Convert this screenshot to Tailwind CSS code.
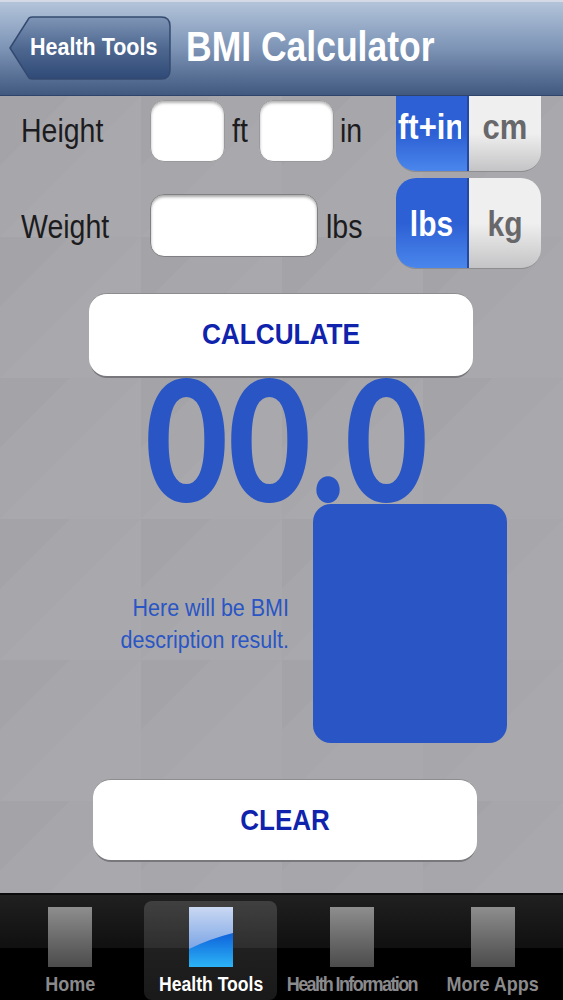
<!DOCTYPE html>
<html lang="en">
<head>
    <meta charset="UTF-8">
    <meta name="viewport" content="width=device-width, initial-scale=1.0">
    <title>BMI Calculator</title>
    <script src="https://cdn.jsdelivr.net/npm/@tailwindcss/browser@4"></script>
</head>
<body class="bg-black font-['Liberation_Sans',Arial,sans-serif]">
<div class="relative w-[563px] h-[1000px] flex flex-col overflow-hidden">

    <!-- Nav bar -->
    <header class="relative z-10 h-[96px] shrink-0 flex items-center pl-[9px] pb-[2px] border-t-2 border-b border-t-[#d5dbe6] border-b-[#2f4468] bg-gradient-to-b from-[#b3c4da] via-[#7d94b6] to-[#41597f]">
        <div class="relative w-[162px] h-[64px] flex items-center pl-[21px]">
            <svg class="absolute inset-0" width="162" height="64" viewBox="0 0 162 64">
                <defs>
                    <linearGradient id="backBg" x1="0" y1="0" x2="0" y2="1">
                        <stop offset="0" stop-color="#7f95b6"/>
                        <stop offset="0.5" stop-color="#4e6890"/>
                        <stop offset="1" stop-color="#2f4a77"/>
                    </linearGradient>
                </defs>
                <path d="M1 32 L20 2 Q21 1 24 1 H152 Q161 1 161 10 V54 Q161 63 152 63 H24 Q21 63 20 62 Z" fill="url(#backBg)" stroke="#34496f" stroke-width="1.5"/>
            </svg>
            <span class="relative inline-block scale-y-115 text-[21.5px] font-bold text-white whitespace-nowrap">Health Tools</span>
        </div>
        <h1 class="ml-[15px] inline-block scale-y-120 text-[35.5px] font-bold text-white whitespace-nowrap">BMI Calculator</h1>
    </header>

    <!-- Form and results -->
    <main class="relative flex-1 bg-[#a7a7ab] overflow-hidden">
        <svg class="absolute inset-0" width="563" height="797">
            <defs>
                <pattern id="tiles" width="141" height="141" patternUnits="userSpaceOnUse">
                    <path d="M0 141 L141 0 V141 Z" fill="#ffffff" fill-opacity="0.02"/>
                    <path d="M0 70 L70 0 H0 Z" fill="#000000" fill-opacity="0.015"/>
                </pattern>
            </defs>
            <rect width="563" height="797" fill="url(#tiles)"/>
        </svg>

        <div class="relative flex flex-col">
            <!-- Height -->
            <div class="flex h-[82px] pl-[21px]">
                <span class="w-[129px] pt-[13px] inline-block scale-y-115 origin-top text-[28.5px] leading-[34px] text-[#1c1c1e]">Height</span>
                <div class="mt-[4px] w-[75px] h-[62px] rounded-[14px] bg-white border border-[#9a9a9d] shadow-[inset_0_2px_3px_rgba(0,0,0,0.3)]"></div>
                <span class="w-[34px] pl-[7px] pt-[13px] inline-block scale-y-115 origin-top text-[28.5px] leading-[34px] text-[#1c1c1e]">ft</span>
                <div class="mt-[4px] w-[75px] h-[62px] rounded-[14px] bg-white border border-[#9a9a9d] shadow-[inset_0_2px_3px_rgba(0,0,0,0.3)]"></div>
                <span class="w-[62px] pl-[6px] pt-[13px] inline-block scale-y-115 origin-top text-[28.5px] leading-[34px] text-[#1c1c1e]">in</span>
                <div class="w-[145px] h-[76px] flex rounded-b-[20px] overflow-hidden border-b border-[#8d8d90]">
                    <div class="w-[73px] pb-[10px] pl-[2px] flex items-center border-r-2 border-[#24499f] bg-[linear-gradient(#2d60d4_50%,#4a86ec)]">
                        <div class="w-[63px] overflow-hidden">
                            <span class="inline-block scale-y-115 text-[31px] font-bold text-white whitespace-nowrap">ft+in</span>
                        </div>
                    </div>
                    <div class="flex-1 pb-[10px] flex items-center justify-center bg-[linear-gradient(#efefef_50%,#c4c4c6)]">
                        <span class="inline-block scale-y-115 text-[31px] font-bold text-[#68686a]">cm</span>
                    </div>
                </div>
            </div>

            <!-- Weight -->
            <div class="flex h-[115px] pl-[21px]">
                <span class="w-[129px] pt-[25px] inline-block scale-y-115 origin-top text-[28.5px] leading-[34px] text-[#1c1c1e]">Weight</span>
                <div class="mt-[16px] w-[168px] h-[63px] rounded-[14px] bg-white border border-[#808083] shadow-[inset_0_2px_3px_rgba(0,0,0,0.35)]"></div>
                <span class="w-[78px] pl-[8px] pt-[25px] inline-block scale-y-115 origin-top text-[28.5px] leading-[34px] text-[#1c1c1e]">lbs</span>
                <div class="w-[145px] h-[91px] flex rounded-[20px] overflow-hidden border-b border-[#8d8d90]">
                    <div class="w-[73px] flex items-center justify-center border-r-2 border-[#24499f] bg-[linear-gradient(#2d60d4_50%,#4a86ec)]">
                        <span class="inline-block scale-y-115 text-[30px] font-bold text-white">lbs</span>
                    </div>
                    <div class="flex-1 flex items-center justify-center bg-[linear-gradient(#efefef_50%,#c4c4c6)]">
                        <span class="inline-block scale-y-115 text-[30px] font-bold text-[#68686a]">kg</span>
                    </div>
                </div>
            </div>

            <!-- Calculate -->
            <div class="ml-[89px] w-[384px] h-[83px] rounded-[18px] bg-white border-t border-[#8d8d90] shadow-[0_3px_0_-1px_#77777c] flex items-center justify-center">
                <span class="inline-block scale-y-115 text-[26.2px] font-bold text-[#1023ad]">CALCULATE</span>
            </div>

            <!-- BMI value -->
            <div class="h-[128px] pb-[7px] pl-[10px] flex justify-center items-center">
                <span class="inline-block scale-y-118 font-['Lato',sans-serif] text-[143px] leading-[100px] font-black text-[#2a55c4]">00.0</span>
            </div>

            <!-- Description and colour block -->
            <div class="flex h-[239px]">
                <p class="w-[289px] mt-[88px] self-start text-right text-[21.5px] leading-[28px] text-[#2a55c4] origin-top scale-y-115">Here will be BMI<br>description result.</p>
                <div class="ml-[24px] w-[194px] h-[239px] rounded-[18px] bg-[#2a55c4]"></div>
            </div>

            <!-- Clear -->
            <div class="ml-[93px] mt-[36px] w-[384px] h-[81px] rounded-[18px] bg-white border-t border-[#8d8d90] shadow-[0_3px_0_-1px_#77777c] flex items-center justify-center">
                <span class="inline-block scale-y-115 text-[26px] font-bold text-[#1023ad]">CLEAR</span>
            </div>
        </div>
    </main>

    <!-- Tab bar -->
    <nav class="h-[107px] shrink-0 grid grid-cols-4 border-t-2 border-[#0b0b0b] shadow-[0_-1px_0_#5f5f62] bg-[linear-gradient(#202020,#101010_50%,#000_51%)]">
        <div class="flex flex-col items-center pt-[12px] text-[#8a8a8c]">
            <div class="w-[44px] h-[60px] bg-gradient-to-b from-[#8e8e8e] to-[#4c4c4c]"></div>
            <span class="mt-[4px] inline-block scale-y-115 text-[18px] font-bold whitespace-nowrap">Home</span>
        </div>
        <div class="flex flex-col items-center pt-[12px] text-white">
            <div class="absolute left-[144px] top-[901px] w-[133px] h-[99px] rounded-[8px] bg-gradient-to-b from-white/15 to-white/10"></div>
            <svg class="relative" width="44" height="60" viewBox="0 0 44 60">
                <defs>
                    <linearGradient id="tabTop" x1="0" y1="0" x2="0" y2="1">
                        <stop offset="0" stop-color="#cad8f2"/>
                        <stop offset="1" stop-color="#7ba5e6"/>
                    </linearGradient>
                    <linearGradient id="tabBottom" x1="0" y1="0" x2="0" y2="1">
                        <stop offset="0.45" stop-color="#0f64dc"/>
                        <stop offset="1" stop-color="#2cb4f6"/>
                    </linearGradient>
                </defs>
                <rect width="44" height="60" fill="url(#tabBottom)"/>
                <path d="M0 0 H44 V26 Q20 32 0 42 Z" fill="url(#tabTop)"/>
            </svg>
            <span class="relative mt-[4px] inline-block scale-y-115 text-[17.6px] font-bold whitespace-nowrap">Health Tools</span>
        </div>
        <div class="flex flex-col items-center pt-[12px] text-[#8a8a8c]">
            <div class="w-[44px] h-[60px] bg-gradient-to-b from-[#8e8e8e] to-[#4c4c4c]"></div>
            <span class="mt-[4px] inline-block scale-y-115 text-[18px] font-bold tracking-[-1.6px] whitespace-nowrap">Health Information</span>
        </div>
        <div class="flex flex-col items-center pt-[12px] text-[#8a8a8c]">
            <div class="w-[44px] h-[60px] bg-gradient-to-b from-[#8e8e8e] to-[#4c4c4c]"></div>
            <span class="mt-[4px] inline-block scale-y-115 text-[18px] font-bold whitespace-nowrap">More Apps</span>
        </div>
    </nav>
</div>
</body>
</html>
